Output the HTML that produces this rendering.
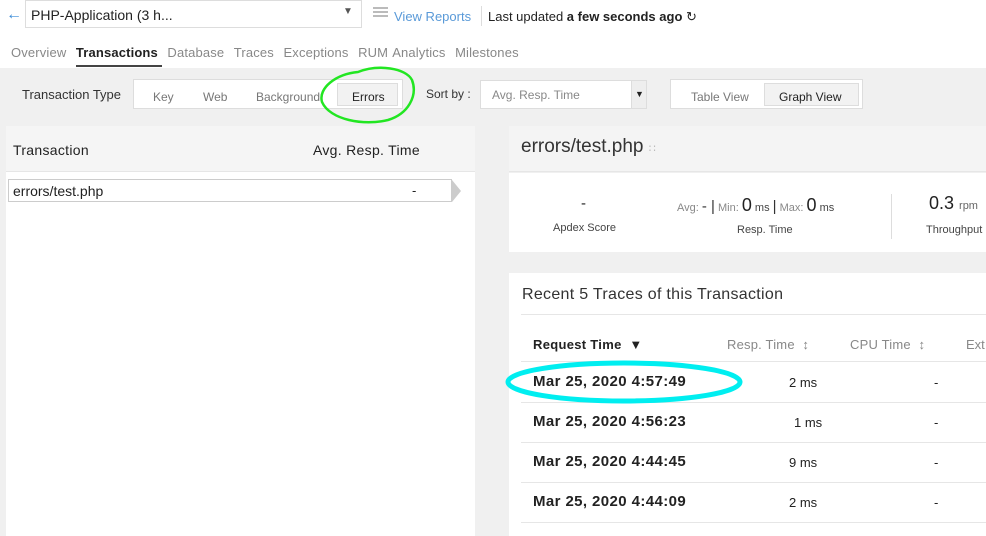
<!DOCTYPE html>
<html><head><style>
*{margin:0;padding:0;box-sizing:border-box}
body{width:986px;height:536px;overflow:hidden;background:#fff;font-family:"Liberation Sans",sans-serif;color:#222;position:relative}
.a{position:absolute;white-space:nowrap}
.d{font-size:15px;font-weight:bold;letter-spacing:0.4px}
</style></head><body>
<div class="a" style="left:6px;top:6px;font-size:16px;color:#3a8bd8">&#8592;</div>
<div class="a" style="left:25px;top:0;width:337px;height:28px;border:1px solid #ddd;font-size:14px;padding:6px 5px">PHP-Application (3 h...</div>
<div class="a" style="left:343px;top:6px;font-size:10px;color:#555">&#9660;</div>
<div class="a" style="left:373px;top:7px;width:15px;height:2px;background:#bbb;box-shadow:0 4px 0 #bbb,0 8px 0 #bbb"></div>
<div class="a" style="left:394px;top:9px;font-size:13px;color:#5a9ad8">View Reports</div>
<div class="a" style="left:481px;top:6px;width:1px;height:20px;background:#ddd"></div>
<div class="a" style="left:488px;top:9px;font-size:13px">Last updated <b>a few seconds ago</b> &#8635;</div>
<div class="a" style="left:11px;top:45px;font-size:13px;color:#888;letter-spacing:0.15px;word-spacing:1px">Overview &nbsp;<b style="color:#222">Transactions</b> &nbsp;Database &nbsp;Traces &nbsp;Exceptions &nbsp;RUM Analytics &nbsp;Milestones</div>
<div class="a" style="left:76px;top:65px;width:86px;height:2px;background:#444"></div>
<div class="a" style="left:0;top:68px;width:986px;height:468px;background:#f0f0f0"></div>
<div class="a" style="left:22px;top:87px;font-size:13px;color:#333">Transaction Type</div>
<div class="a" style="left:133px;top:79px;width:270px;height:30px;background:#fff;border:1px solid #ddd"></div>
<div class="a" style="left:153px;top:90px;font-size:12px;color:#777">Key</div>
<div class="a" style="left:203px;top:90px;font-size:12px;color:#777">Web</div>
<div class="a" style="left:256px;top:90px;font-size:12px;color:#777">Background</div>
<div class="a" style="left:337px;top:83px;width:61px;height:23px;background:#f2f2f2;border:1px solid #ddd;font-size:12px;padding:6px 14px">Errors</div>
<svg class="a" style="left:318px;top:66px" width="102" height="58"><path d="M40 6 C60 -2 88 2 94 14 C100 30 90 48 70 54 C46 60 12 54 4 36 C0 22 18 8 40 6 Z" fill="none" stroke="#22e622" stroke-width="2.5"/></svg>
<div class="a" style="left:426px;top:87px;font-size:12px;color:#333">Sort by :</div>
<div class="a" style="left:480px;top:80px;width:167px;height:29px;background:#fff;border:1px solid #ddd;font-size:12px;color:#888;padding:7px 11px">Avg. Resp. Time</div>
<div class="a" style="left:631px;top:81px;width:15px;height:27px;background:#eee;border-left:1px solid #ddd;font-size:9px;padding:8px 3px">&#9660;</div>
<div class="a" style="left:670px;top:79px;width:193px;height:30px;background:#fff;border:1px solid #ddd"></div>
<div class="a" style="left:691px;top:90px;font-size:12px;color:#777">Table View</div>
<div class="a" style="left:764px;top:83px;width:95px;height:23px;background:#f2f2f2;border:1px solid #ddd;font-size:12px;padding:6px 14px">Graph View</div>
<div class="a" style="left:6px;top:126px;width:469px;height:410px;background:#fff"></div>
<div class="a" style="left:6px;top:126px;width:469px;height:46px;background:#f5f5f5;border-bottom:1px solid #e6e6e6"></div>
<div class="a" style="left:13px;top:142px;font-size:14px;letter-spacing:0.3px">Transaction</div>
<div class="a" style="left:313px;top:142px;font-size:14px;letter-spacing:0.3px">Avg. Resp. Time</div>
<div class="a" style="left:8px;top:179px;width:444px;height:23px;border:1px solid #ccc;font-size:14px;padding:3px 4px">errors/test.php</div>
<div class="a" style="left:412px;top:183px;font-size:13px">-</div>
<div class="a" style="left:452px;top:180px;width:0;height:0;border-top:11px solid transparent;border-bottom:11px solid transparent;border-left:9px solid #ccc"></div>
<div class="a" style="left:509px;top:126px;width:477px;height:46px;background:#f4f4f4;border-bottom:1px solid #e6e6e6"></div>
<div class="a" style="left:521px;top:136px;font-size:19px;color:#333">errors/test.php <span style="font-size:11px;color:#bbb">&#8759;</span></div>
<div class="a" style="left:509px;top:173px;width:477px;height:79px;background:#fff"></div>
<div class="a" style="left:581px;top:195px;font-size:15px">-</div>
<div class="a" style="left:553px;top:222px;font-size:11px;color:#444">Apdex Score</div>
<div class="a" style="left:677px;top:195px;font-size:11px;color:#888">Avg: <span style="font-size:15px;color:#333">- |</span> Min: <span style="font-size:18px;color:#222">0</span> <span style="color:#444">ms</span> <span style="font-size:15px;color:#333">|</span> Max: <span style="font-size:18px;color:#222">0</span> <span style="color:#444">ms</span></div>
<div class="a" style="left:737px;top:224px;font-size:11px;color:#444">Resp. Time</div>
<div class="a" style="left:891px;top:194px;width:1px;height:45px;background:#ddd"></div>
<div class="a" style="left:929px;top:193px;font-size:18px;color:#222">0.3 <span style="font-size:11px;color:#666">rpm</span></div>
<div class="a" style="left:926px;top:224px;font-size:11px;color:#444">Throughput</div>
<div class="a" style="left:509px;top:273px;width:477px;height:263px;background:#fff"></div>
<div class="a" style="left:522px;top:286px;font-size:16px;color:#333;letter-spacing:0.3px">Recent 5 Traces of this Transaction</div>
<div class="a" style="left:521px;top:314px;width:465px;height:1px;background:#e6e6e6"></div>
<div class="a" style="left:533px;top:337px;font-size:13px;font-weight:bold;letter-spacing:0.3px">Request Time &nbsp;&#9660;</div>
<div class="a" style="left:727px;top:337px;font-size:13px;color:#888;letter-spacing:0.2px">Resp. Time &nbsp;&#8597;</div>
<div class="a" style="left:850px;top:337px;font-size:13px;color:#888;letter-spacing:0.2px">CPU Time &nbsp;&#8597;</div>
<div class="a" style="left:966px;top:337px;font-size:13px;color:#888">Ext</div>
<div class="a" style="left:521px;top:361px;width:465px;height:1px;background:#e6e6e6"></div>
<div class="a" style="left:521px;top:402px;width:465px;height:1px;background:#e6e6e6"></div>
<div class="a" style="left:521px;top:442px;width:465px;height:1px;background:#e6e6e6"></div>
<div class="a" style="left:521px;top:482px;width:465px;height:1px;background:#e6e6e6"></div>
<div class="a" style="left:521px;top:522px;width:465px;height:1px;background:#e6e6e6"></div>
<div class="a d" style="left:533px;top:373px">Mar 25, 2020 4:57:49</div>
<div class="a d" style="left:533px;top:413px">Mar 25, 2020 4:56:23</div>
<div class="a d" style="left:533px;top:453px">Mar 25, 2020 4:44:45</div>
<div class="a d" style="left:533px;top:493px">Mar 25, 2020 4:44:09</div>
<div class="a" style="left:789px;top:375px;font-size:13px">2 ms</div>
<div class="a" style="left:794px;top:415px;font-size:13px">1 ms</div>
<div class="a" style="left:789px;top:455px;font-size:13px">9 ms</div>
<div class="a" style="left:789px;top:495px;font-size:13px">2 ms</div>
<div class="a" style="left:934px;top:375px;font-size:13px">-</div>
<div class="a" style="left:934px;top:415px;font-size:13px">-</div>
<div class="a" style="left:934px;top:455px;font-size:13px">-</div>
<div class="a" style="left:934px;top:495px;font-size:13px">-</div>
<svg class="a" style="left:503px;top:358px" width="242" height="48"><ellipse cx="121" cy="24" rx="116" ry="19" fill="none" stroke="#00eef0" stroke-width="5"/></svg>
</body></html>
